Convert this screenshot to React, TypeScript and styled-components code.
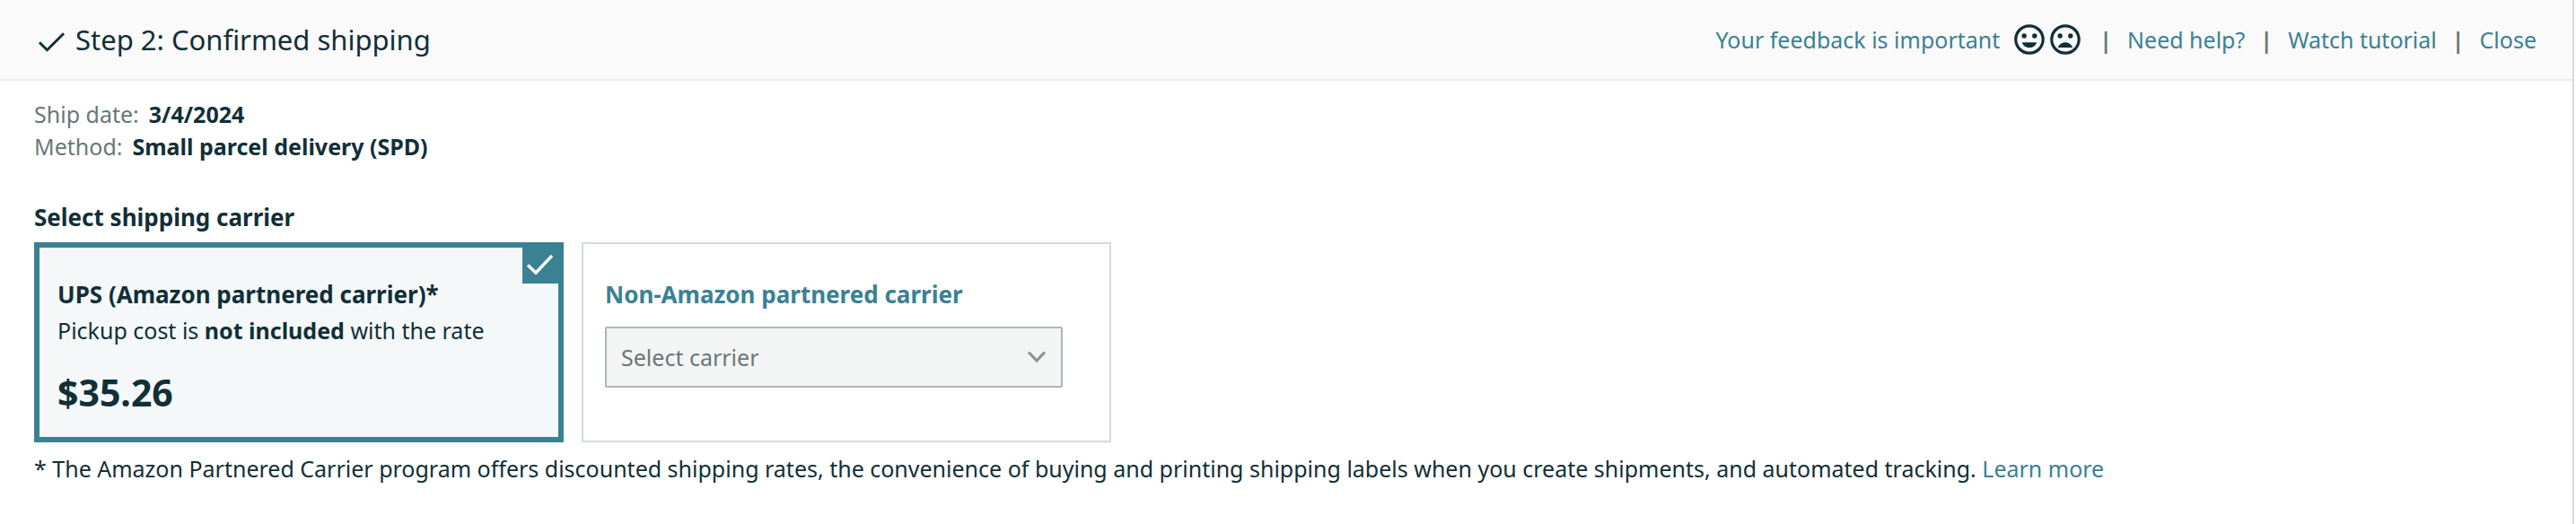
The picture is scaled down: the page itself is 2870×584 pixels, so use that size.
import React, { useState } from "react";
import styled, { createGlobalStyle } from "styled-components";

const color = {
  ink: "#112f37",
  muted: "#687876",
  link: "#3a8194",
  line: "#d5dbdb",
  selectedBg: "#f4f8f9",
};

const GlobalStyle = createGlobalStyle`
  *, *::before, *::after { box-sizing: border-box; }
  body {
    margin: 0;
    background: #ffffff;
    color: ${color.ink};
    font-family: "Noto Sans", "Open Sans", sans-serif;
    font-size: 25px;
    line-height: 36px;
  }
`;

const Page = styled.div`
  min-height: 100vh;
  margin-right: 2px;
  border-right: 2px solid ${color.line};
`;

const Header = styled.header`
  display: flex;
  align-items: center;
  justify-content: space-between;
  min-height: 90px;
  padding: 0 40px 0 38px;
  background: #fafafa;
  border-bottom: 2px solid #eaeded;
`;

const StepTitle = styled.h1`
  display: flex;
  align-items: center;
  gap: 10px;
  margin: 0;
  font-size: 31px;
  font-weight: 400;
`;

const HeaderLinks = styled.nav`
  display: flex;
  align-items: center;
  gap: 17px;
`;

const Feedback = styled.div`
  display: flex;
  align-items: center;
  gap: 6px;
  margin-right: 4px;
`;

const FaceButton = styled.button`
  display: flex;
  padding: 0;
  border: 0;
  background: none;
  color: ${color.ink};
  cursor: pointer;
`;

const Link = styled.a`
  color: ${color.link};
  text-decoration: none;
`;

const FeedbackLink = styled(Link)`
  margin-right: 10px;
`;

const Divider = styled.span`
  color: ${color.muted};
  font-weight: 700;
`;

const Main = styled.main`
  padding: 19px 38px;
`;

const Details = styled.dl`
  margin: 0 0 43px;
`;

const DetailRow = styled.div`
  display: flex;
  gap: 11px;
`;

const DetailName = styled.dt`
  color: ${color.muted};
`;

const DetailValue = styled.dd`
  margin: 0;
  font-weight: 700;
`;

const SectionTitle = styled.h2`
  margin: 0 0 10px;
  font-size: 26px;
  font-weight: 700;
`;

const Carriers = styled.div`
  display: grid;
  grid-template-columns: repeat(2, minmax(0, 590px));
  gap: 20px;
  margin-bottom: 11px;
`;

const Card = styled.div<{ $selected?: boolean }>`
  position: relative;
  display: block;
  border: ${(p) => (p.$selected ? `6px solid ${color.link}` : `2px solid ${color.line}`)};
  padding: ${(p) => (p.$selected ? "34px 20px 26px" : "38px 24px 30px")};
  background: ${(p) => (p.$selected ? color.selectedBg : "#ffffff")};
`;

const HiddenRadio = styled.input`
  position: absolute;
  width: 1px;
  height: 1px;
  margin: 0;
  opacity: 0;
`;

const SelectedBadge = styled.span`
  position: absolute;
  top: -6px;
  right: -6px;
  display: flex;
  width: 46px;
  height: 46px;
  background: ${color.link};
  color: #ffffff;
`;

const CardTitle = styled.span<{ $link?: boolean }>`
  display: block;
  font-size: 26px;
  font-weight: 700;
  color: ${(p) => (p.$link ? color.link : color.ink)};
`;

const PickupNote = styled.span`
  display: block;
  margin-top: 4px;
`;

const Price = styled.strong`
  display: block;
  margin-top: 27px;
  font-size: 41px;
  line-height: 48px;
`;

const SelectWrap = styled.div`
  position: relative;
  max-width: 510px;
  margin-top: 18px;
`;

const CarrierSelect = styled.select`
  display: block;
  width: 100%;
  height: 68px;
  padding: 0 48px 0 16px;
  border: 2px solid #aab7b8;
  border-radius: 2px;
  background: #f3f5f4;
  color: ${color.muted};
  font: inherit;
  appearance: none;
`;

const Chevron = styled.svg`
  position: absolute;
  top: 26px;
  right: 18px;
  pointer-events: none;
`;

const Footnote = styled.p`
  margin: 0;
`;

const HeaderCheck = () => (
  <svg width="36" height="36" viewBox="0 0 36 36" fill="none" aria-hidden="true">
    <path d="M6 21.2 14.5 29.7 33 11.2" stroke="currentColor" strokeWidth="3" />
  </svg>
);

const BadgeCheck = () => (
  <svg width="46" height="46" viewBox="0 0 46 46" fill="none" aria-hidden="true">
    <path d="M6 25.5 15 34 33 15" stroke="currentColor" strokeWidth="3.4" />
  </svg>
);

const Face = ({ happy }: { happy?: boolean }) => (
  <svg width="34" height="34" viewBox="0 0 34 34" aria-hidden="true">
    <circle cx="17" cy="17" r="15.2" fill="none" stroke="currentColor" strokeWidth="3.2" />
    <circle cx="11.2" cy="13" r="2.7" fill="currentColor" />
    <circle cx="22.8" cy="13" r="2.7" fill="currentColor" />
    {happy ? (
      <path d="M8.8 20.2H25.2C24 24 21 26 17 26S10 24 8.8 20.2Z" fill="currentColor" />
    ) : (
      <path d="M8.8 26H25.2C24 22.4 21 20.2 17 20.2S10 22.4 8.8 26Z" fill="currentColor" />
    )}
  </svg>
);

export default function App() {
  const [carrier, setCarrier] = useState("ups");

  return (
    <>
      <GlobalStyle />
      <Page>
        <Header>
          <StepTitle>
            <HeaderCheck />
            Step 2: Confirmed shipping
          </StepTitle>
          <HeaderLinks>
            <Feedback>
              <FeedbackLink href="#feedback">Your feedback is important</FeedbackLink>
              <FaceButton type="button" aria-label="Satisfied">
                <Face happy />
              </FaceButton>
              <FaceButton type="button" aria-label="Dissatisfied">
                <Face />
              </FaceButton>
            </Feedback>
            <Divider>|</Divider>
            <Link href="#help">Need help?</Link>
            <Divider>|</Divider>
            <Link href="#tutorial">Watch tutorial</Link>
            <Divider>|</Divider>
            <Link href="#close">Close</Link>
          </HeaderLinks>
        </Header>
        <Main>
          <Details>
            <DetailRow>
              <DetailName>Ship date:</DetailName>
              <DetailValue>3/4/2024</DetailValue>
            </DetailRow>
            <DetailRow>
              <DetailName>Method:</DetailName>
              <DetailValue>Small parcel delivery (SPD)</DetailValue>
            </DetailRow>
          </Details>
          <SectionTitle>Select shipping carrier</SectionTitle>
          <Carriers>
            <Card as="label" $selected>
              <HiddenRadio
                type="radio"
                name="carrier"
                value="ups"
                checked={carrier === "ups"}
                onChange={() => setCarrier("ups")}
              />
              <CardTitle>UPS (Amazon partnered carrier)*</CardTitle>
              <PickupNote>
                Pickup cost is <b>not included</b> with the rate
              </PickupNote>
              <Price>$35.26</Price>
              <SelectedBadge>
                <BadgeCheck />
              </SelectedBadge>
            </Card>
            <Card>
              <CardTitle as="label" htmlFor="other-carrier" $link>
                Non-Amazon partnered carrier
              </CardTitle>
              <SelectWrap>
                <CarrierSelect id="other-carrier" defaultValue="">
                  <option value="">Select carrier</option>
                </CarrierSelect>
                <Chevron width="22" height="16" viewBox="0 0 22 16" fill="none" aria-hidden="true">
                  <path d="M2 2.5 11 12 20 2.5" stroke="#879596" strokeWidth="3.2" />
                </Chevron>
              </SelectWrap>
            </Card>
          </Carriers>
          <Footnote>
            * The Amazon Partnered Carrier program offers discounted shipping rates, the convenience of buying and
            printing shipping labels when you create shipments, and automated tracking.{" "}
            <Link href="#learn-more">Learn more</Link>
          </Footnote>
        </Main>
      </Page>
    </>
  );
}
